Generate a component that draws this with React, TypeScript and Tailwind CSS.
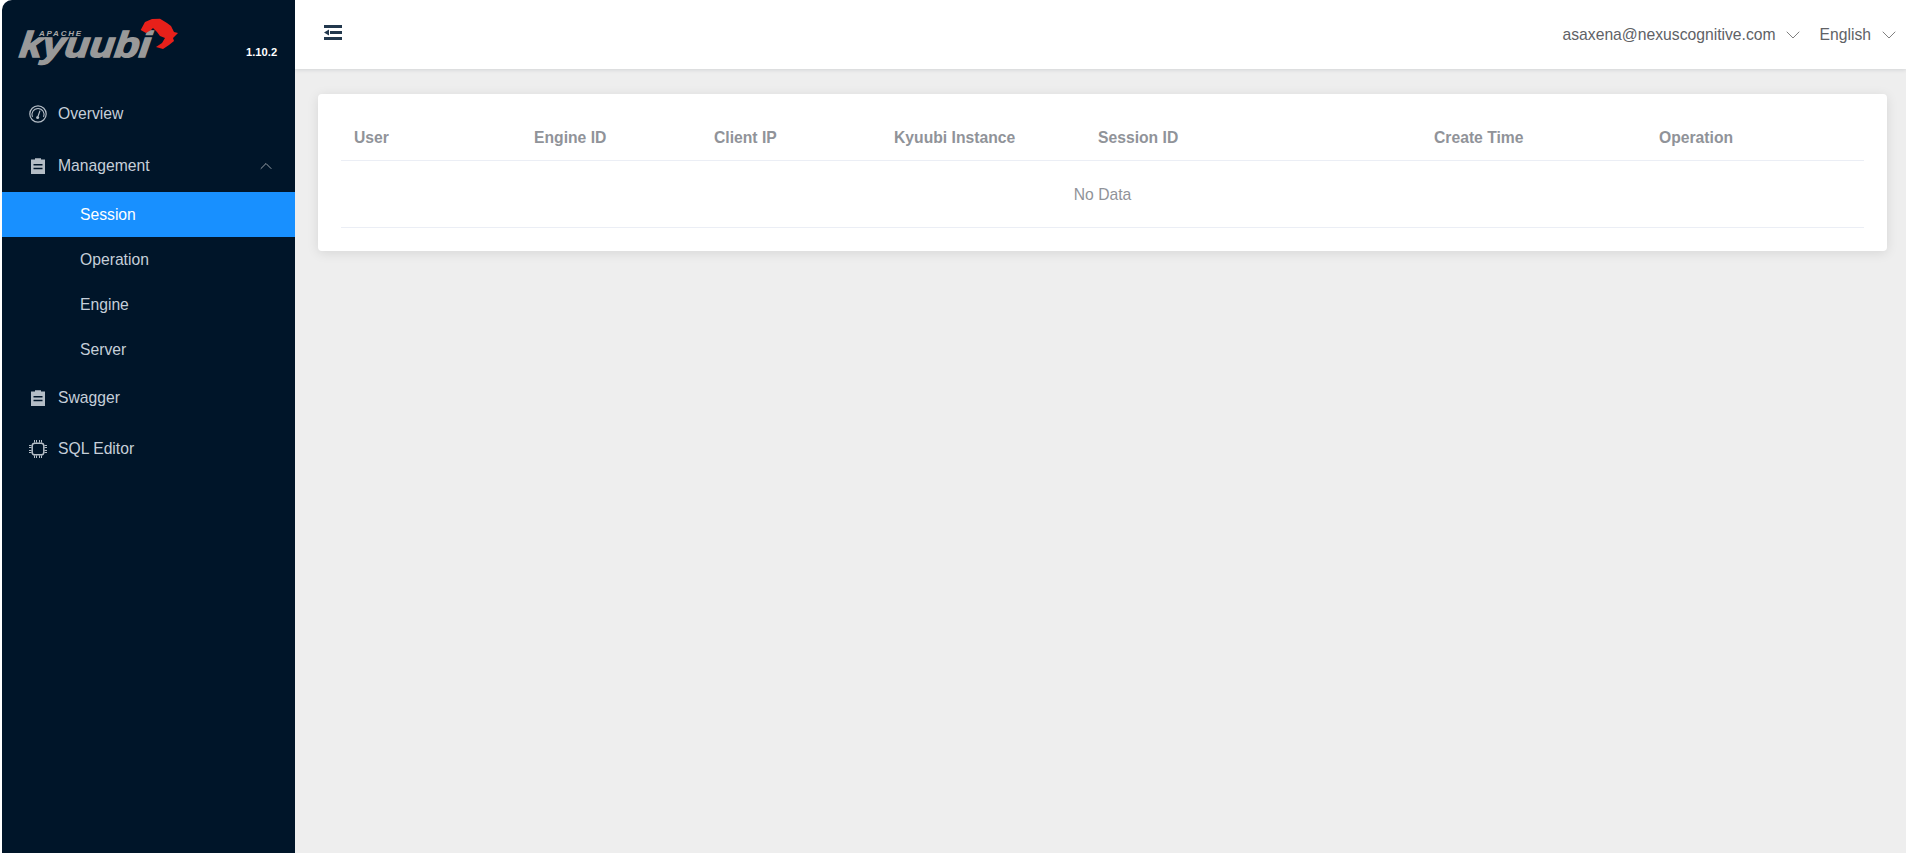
import { ChevronDown, ChevronUp } from "lucide-react";

const font = { fontFamily: '"Liberation Sans", Arial, sans-serif' };

function Gauge() {
    return (
        <svg viewBox="0 0 18 18" className="w-[18px] h-[18px]" fill="none" stroke="currentColor">
            <circle cx="9" cy="9" r="8.2" strokeWidth="1.2" />
            <path d="M3.4 12a6.1 6.1 0 1 1 11.2 0" strokeWidth="1.1" />
            <path d="M11 5.6 9 11.5" strokeWidth="1.2" />
            <circle cx="8.6" cy="12.6" r="1.5" fill="currentColor" stroke="none" />
        </svg>
    );
}

function Clipboard() {
    return (
        <svg viewBox="0 0 14 16" className="w-[14px] h-4" fill="currentColor">
            <path d="M4 1.5V.3h6v1.2h4V16H0V1.5h4ZM2.5 6v1.4h9V6h-9Zm0 3.8v1.4h9V9.8h-9Z" fillRule="evenodd" />
        </svg>
    );
}

function Cpu() {
    return (
        <svg viewBox="0 0 18 18" className="w-[18px] h-[18px]" fill="none" stroke="currentColor">
            <rect x="3.2" y="3.2" width="11.6" height="11.6" rx="2.6" strokeWidth="1.5" />
            <path d="M5.5 0v2.6M7.5 0v2.6M10.5 0v2.6M12.5 0v2.6M5.5 15.4V18M7.5 15.4V18M10.5 15.4V18M12.5 15.4V18M0 5.5h2.6M0 7.5h2.6M0 10.5h2.6M0 12.5h2.6M15.4 5.5H18M15.4 7.5H18M15.4 10.5H18M15.4 12.5H18" strokeWidth="1" />
        </svg>
    );
}

function Logo() {
    return (
        <div className="relative w-[180px] h-[70px]">
            <span className="absolute left-[20px] top-[24px] text-[36px] leading-[42px] font-bold italic text-[#999999] [-webkit-text-stroke:1.5px_#999999] origin-left scale-x-[1.13] -skew-x-6">kyuubi</span>
            <span className="absolute left-[39px] top-[29px] text-[8px] leading-[9px] font-bold italic tracking-[1.8px] text-[#a8a8a8]">APACHE</span>
            <svg viewBox="0 0 38 32" className="absolute left-[140px] top-[18px] w-[38px] h-[32px]" fill="#e8201a">
                <path d="M.7 12 5 4l7-3 8-.3 7 4.3 4 3 3 6 4 1-5 5 1 3-5 4-6 4-7-2 6-4 3-5-5-2-3-4-4-4-2 2-5 3Z" />
            </svg>
        </div>
    );
}

function MenuItem({ icon, label, right, height }: { icon: React.ReactNode; label: string; right?: React.ReactNode; height: string }) {
    return (
        <div className={"flex items-center pl-[27px] pr-[19px] text-[#b4bdc6] " + height}>
            <span className="w-[18px] flex justify-center shrink-0">{icon}</span>
            <span className="ml-[11px] text-[15.7px] text-[#c6cfd9]">{label}</span>
            {right && <span className="ml-auto">{right}</span>}
        </div>
    );
}

function SubItem({ label, active }: { label: string; active?: boolean }) {
    return (
        <div className={"h-[45px] flex items-center pl-[78px] text-[15.7px] " + (active ? "bg-[#1890ff] text-white" : "text-[#c6cfd9]")}>
            {label}
        </div>
    );
}

const columns = ["User", "Engine ID", "Client IP", "Kyuubi Instance", "Session ID", "Create Time", "Operation"];

export default function App() {
    return (
        <div className="flex h-[853px] w-[1906px] overflow-hidden bg-white pl-[2px]" style={font}>
            <aside className="w-[293px] shrink-0 bg-[#001529] rounded-tl-[10px] flex flex-col">
                <div className="h-[88px] relative">
                    <div className="absolute left-[-2px] top-0"><Logo /></div>
                    <span className="absolute left-[244px] top-[46px] text-[11.2px] leading-[13px] font-bold text-white">1.10.2</span>
                </div>
                <MenuItem height="h-[52px]" icon={<Gauge />} label="Overview" />
                <MenuItem height="h-[52px]" icon={<Clipboard />} label="Management" right={<ChevronUp className="w-5 h-5 text-[#a6adb4]" strokeWidth={1.1} />} />
                <SubItem label="Session" active />
                <SubItem label="Operation" />
                <SubItem label="Engine" />
                <SubItem label="Server" />
                <MenuItem height="h-[51px]" icon={<Clipboard />} label="Swagger" />
                <MenuItem height="h-[51px]" icon={<Cpu />} label="SQL Editor" />
            </aside>
            <div className="flex-1 flex flex-col bg-[#eeeeee]">
                <header className="h-[69px] bg-white shadow-[0_1px_4px_rgba(0,21,41,0.12)] flex items-center pl-[29px] pr-[11px] shrink-0 relative">
                    <svg viewBox="0 0 18 15" className="w-[18px] h-[15px] -mt-[5px] text-[#22384d]" fill="currentColor">
                        <path d="M0 0h18v3H0zM0 12h18v3H0zM6 6h12v3H6zM0 7.5 5 4.5v6z" />
                    </svg>
                    <div className="ml-auto flex items-center text-[15.7px] text-[#606266]">
                        <span>asaxena@nexuscognitive.com</span>
                        <ChevronDown className="w-6 h-6 ml-[5px] -mr-[6px] text-[#808080]" strokeWidth={1} />
                        <span className="ml-[21px]">English</span>
                        <ChevronDown className="w-6 h-6 ml-[6px] -mr-[6px] text-[#808080]" strokeWidth={1} />
                    </div>
                </header>
                <main className="pt-[25px] pl-[23px] pr-[19px]">
                    <div className="bg-white rounded-[4px] shadow-[0_2px_12px_rgba(0,0,0,0.1)] pt-[20px] px-[23px] pb-[23px]">
                        <div className="grid grid-cols-[180px_180px_180px_204px_336px_225px_218px] h-[47px] items-center border-b border-[#ebeef5] text-[15.7px] font-bold text-[#909399] pt-[2px]">
                            {columns.map((c) => (
                                <div key={c} className="pl-[13px]">{c}</div>
                            ))}
                        </div>
                        <div className="h-[67px] flex items-center justify-center border-b border-[#ebeef5] text-[15.7px] text-[#909399] pt-[2px]">
                            No Data
                        </div>
                    </div>
                </main>
            </div>
        </div>
    );
}
